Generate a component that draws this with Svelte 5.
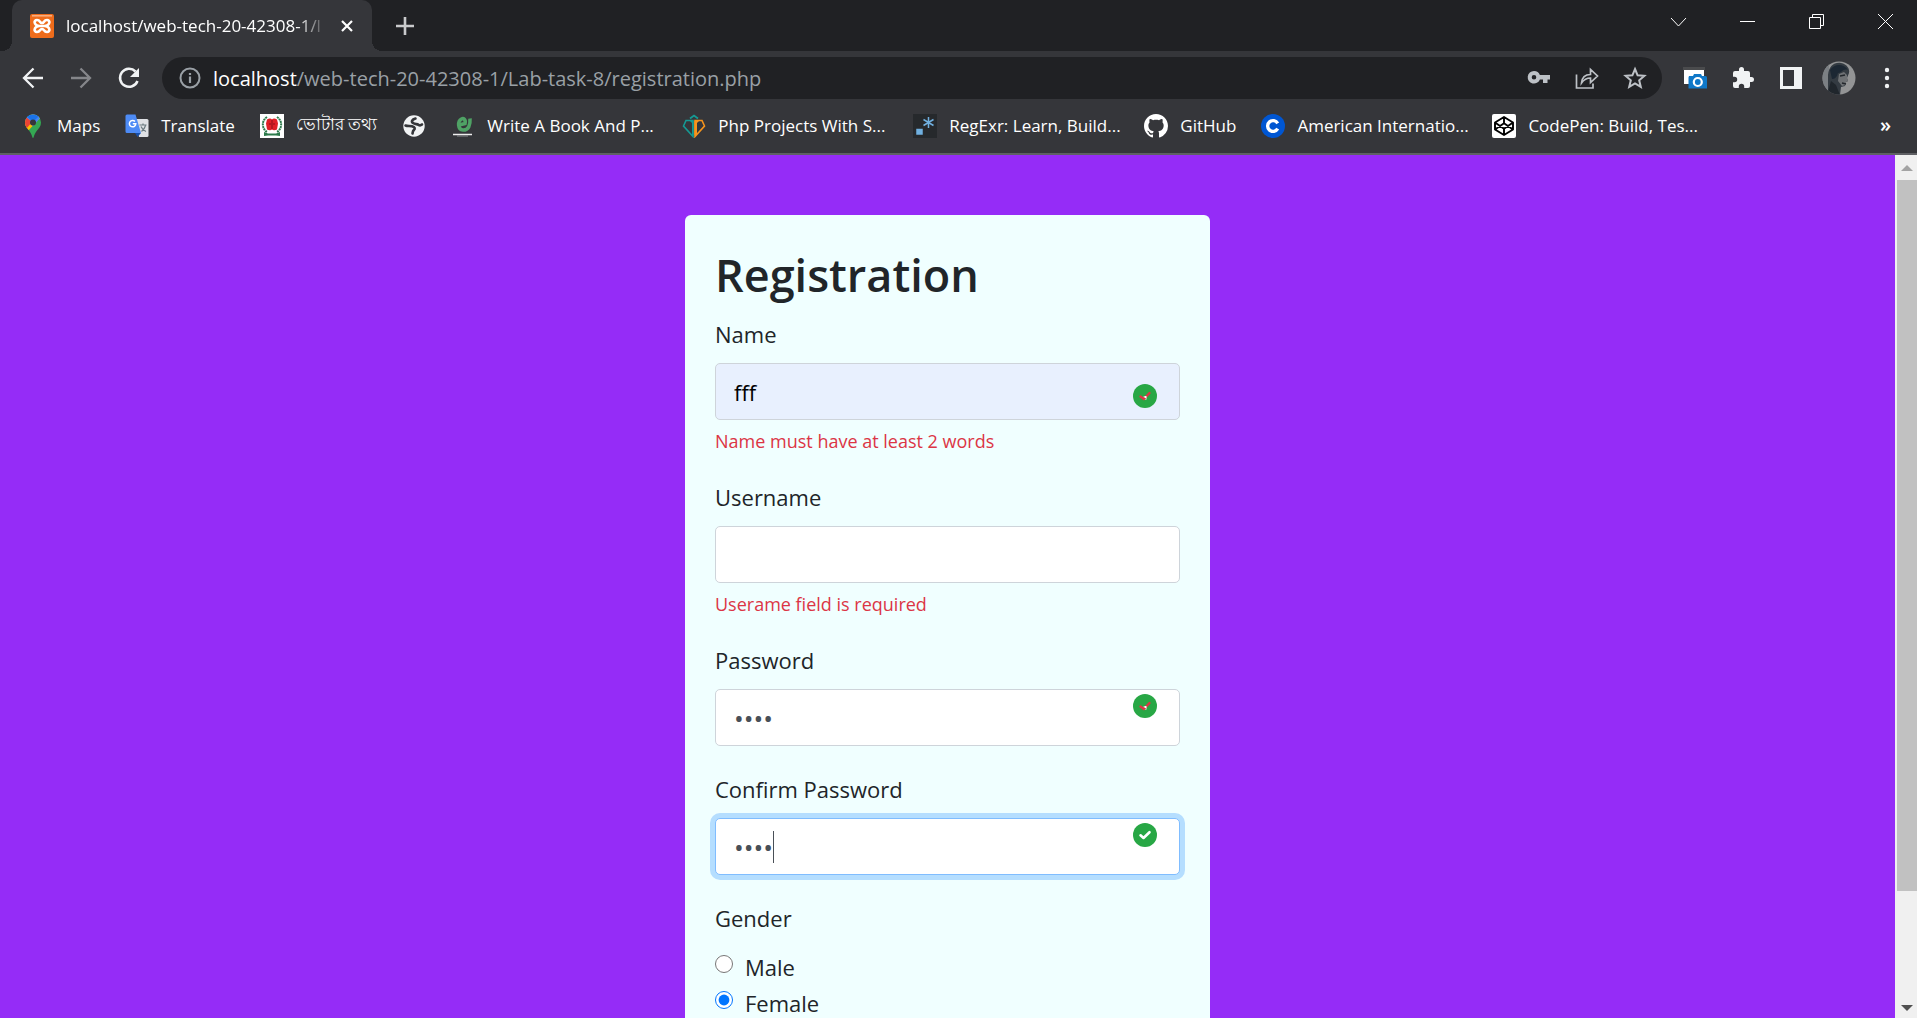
<script>
  let name = $state('fff');
  let username = $state('');
  let password = $state('1234');
  let confirm = $state('1234');
  let gender = $state('female');

  const bookmarks = [
    { id: 'maps', title: 'Maps' },
    { id: 'translate', title: 'Translate' },
    { id: 'voter', title: 'ভোটার তথ্য' },
    { id: 'globe', title: '' },
    { id: 'ebook', title: 'Write A Book And P...', long: true },
    { id: 'php', title: 'Php Projects With S...', long: true },
    { id: 'regexr', title: 'RegExr: Learn, Build...', long: true },
    { id: 'github', title: 'GitHub' },
    { id: 'coursera', title: 'American Internatio...', long: true },
    { id: 'codepen', title: 'CodePen: Build, Tes...', long: true }
  ];
</script>

{#snippet bookmarkIcon(id)}
  <svg class="icon" viewBox="0 0 24 24" aria-hidden="true">
    {#if id === 'maps'}
      <clipPath id="pin"><path d="M12 0.5a8 8 0 0 0-8 8c0 3.500 2 5.500 4 8 1.800 2.300 2.600 4 3.200 6.200.2.900.5 1.300.8 1.300s.6-.4.8-1.300c.6-2.200 1.400-3.900 3.200-6.200 2-2.500 4-4.500 4-8a8 8 0 0 0-8-8z" /></clipPath>
      <g clip-path="url(#pin)">
        <path d="M0 0h24v24H0z" fill="#34a853" />
        <path d="M20 0v3L6 18 0 10 10 0z" fill="#fbbc04" />
        <path d="M8 0h12v3l-8 9-8-6z" fill="#4285f4" />
        <path d="M0 0h6l-1 3 6 5-6 7-5-2z" fill="#ea4335" />
        <path d="M6 2.500 12 8l6-6-4-3H9z" fill="#1a73e8" />
      </g>
      <circle cx="12" cy="8.500" r="3" fill="#35363a" />
    {:else if id === 'translate'}
      <path d="M9 5h13a1.500 1.500 0 0 1 1.500 1.500v15A1.500 1.500 0 0 1 22 23h-8z" fill="#dfe1e5" />
      <path d="M10 19h6l-3.500 4z" fill="#174ea6" />
      <path d="M2 .5h8.500L16 19H2A1.500 1.500 0 0 1 .5 17.500V2A1.500 1.500 0 0 1 2 .5z" fill="#4d8bf5" />
      <path d="M10 7.500a3.200 3.200 0 1 0 .8 2.300H7.800" fill="none" stroke="#fff" stroke-width="1.500" />
      <path d="M14.500 11h7M18 9.500V11M16 12.500c1 2.500 2.500 4 5 5M20.500 11.500c-.8 3-2 4.500-4 6" fill="none" stroke="#6b7a80" stroke-width="1.200" />
    {:else if id === 'voter'}
      <path d="M0 0h24v24H0z" fill="#fff" />
      <path d="M7 3C1 7 2 15 7 18M17 3c6 4 5 12 0 15" fill="none" stroke="#2c7a4b" stroke-width="2" stroke-dasharray="2 .6" />
      <path d="M4 18l4 1.500h8l4-1.500v4l-4-.5H8L4 22z" fill="#2c7a4b" />
      <path d="M7 5.500c2-1.500 4-1.500 5 0 1-1.500 3-1.500 5 0l1 4-1 6c-2 1-4 1-5 0-1 1-3 1-5 0l-1-6z" fill="#e01f26" />
      <path d="M9 10h2M13 10h2M12 6v9" stroke="#8c1016" stroke-width="1" />
    {:else if id === 'globe'}
      <circle cx="12" cy="12" r="10.700" fill="#f1f3f4" />
      <path d="M13.500 4.500C10 5.500 9 7.500 11 9s4 .8 5.500 1.800 2.500.5 3.500-.3M3.500 11.500c2 .8 4.500.2 6.500.8 3 1 3.500 2.500 1.800 3.800-1.300 1-.8 2-1.300 3.400" fill="none" stroke="#35363a" stroke-width="2.600" stroke-linecap="round" stroke-linejoin="round" />
    {:else if id === 'ebook'}
      <path d="M8 11 14 9.500C15 5.500 12.500 4 10.500 5 6.500 7 6.500 15.500 12 16c5.500.3 7.500-5 7-11.500" fill="none" stroke="#4fa265" stroke-width="3.600" />
      <path d="M2 20.500h19" stroke="#eee" stroke-width="1.500" />
      <path d="M6 22h11" stroke="#8a8b8e" stroke-width="1" />
    {:else if id === 'php'}
      <path d="M8 4.500 12 1.500l4 3" fill="none" stroke="#159a94" stroke-width="1.800" />
      <path d="M4 6.500h7v16L1.500 12z" fill="none" stroke="#159a94" stroke-width="1.600" />
      <path d="M8 7h3.500v15H10V9z" fill="#159a94" />
      <path d="M13 6.500h7l2.500 5.500L13 22.500z" fill="none" stroke="#f7941d" stroke-width="1.600" />
      <path d="M12.500 7H17l-2 2v12h-2.500z" fill="#f7941d" />
    {:else if id === 'regexr'}
      <path d="M0 0h24v24H0z" fill="#26292c" />
      <path d="M4 15.500h5v4.500H4zM15.500 3v11M10.500 5.500l10 6M20.500 5.500l-10 6" fill="#70b0e0" stroke="#70b0e0" stroke-width="1.500" />
    {:else if id === 'github'}
      <path fill="#fff" d="M12 0C5.370 0 0 5.370 0 12c0 5.310 3.435 9.795 8.205 11.385.6.105.825-.255.825-.57 0-.285-.015-1.230-.015-2.235-3.015.555-3.795-.735-4.035-1.410-.135-.345-.72-1.410-1.230-1.695-.42-.225-1.020-.78-.015-.795.945-.015 1.620.87 1.845 1.230 1.080 1.815 2.805 1.305 3.495.99.105-.78.42-1.305.765-1.605-2.670-.3-5.460-1.335-5.460-5.925 0-1.305.465-2.385 1.230-3.225-.12-.3-.54-1.530.12-3.180 0 0 1.005-.315 3.300 1.230.96-.27 1.980-.405 3-.405s2.040.135 3 .405c2.295-1.560 3.300-1.230 3.300-1.230.66 1.650.24 2.880.12 3.180.765.84 1.230 1.905 1.230 3.225 0 4.605-2.805 5.625-5.475 5.925.435.375.81 1.095.81 2.220 0 1.605-.015 2.895-.015 3.300 0 .315.225.69.825.57A12.020 12.020 0 0 0 24 12c0-6.630-5.370-12-12-12z" />
    {:else if id === 'coursera'}
      <circle cx="12" cy="12" r="12" fill="#0056d2" />
      <path d="M16.700 9.300A5.400 5.400 0 1 0 16.700 14.700" fill="none" stroke="#fff" stroke-width="3.400" />
    {:else if id === 'codepen'}
      <rect width="24" height="24" rx="2" fill="#fff" />
      <path d="M12 3l9 5.500v7L12 21l-9-5.500v-7zM12 3v6M12 15v6M3 8.500l9 6.300 9-6.300M3 15.500l9-6.300 9 6.300" fill="none" stroke="#000" stroke-width="1.900" stroke-linejoin="round" />
    {/if}
  </svg>
{/snippet}

{#snippet validMark(tone)}
  <svg class="mark" viewBox="0 0 24 24" aria-hidden="true">
    <circle cx="12" cy="12" r="12" fill="#28a745" />
    {#if tone === 'mixed'}
      <path d="M10.500 12.500h3v3h-3z" fill="#fff" />
      <path d="M7.500 12.500 10.800 15 16.500 9" fill="none" stroke="#dc3545" stroke-width="2.400" stroke-linecap="round" />
      <path d="M11.500 12h2v2h-2z" fill="#fff" />
    {:else}
      <path d="M7.500 12.300 10.500 15 16.500 9.200" fill="none" stroke="#fff" stroke-width="2.600" stroke-linecap="round" stroke-linejoin="round" />
    {/if}
  </svg>
{/snippet}

<div class="browser">
  <header>
    <div class="tabstrip">
      <div class="tab">
        <svg class="icon" viewBox="0 0 24 24" aria-hidden="true">
          <rect width="24" height="24" rx="2" fill="#ee6c1b" />
          <path d="M2 1.800h20" stroke="#f9b184" stroke-width="1.500" />
          <path d="M9 12h6M9 12c-5.500-1-5.500-6-2-6s2.500 3 5 3 1.500-3 5-3 3.500 5-2 6c5.500 1 5.500 6 2 6s-2.500-3-5-3-1.500 3-5 3-3.500-5 2-6z" fill="none" stroke="#fff" stroke-width="2.600" stroke-linejoin="round" />
        </svg>
        <span class="tab-title">localhost/web-tech-20-42308-1/l</span>
        <button class="tab-close" aria-label="Close tab">
          <svg viewBox="0 0 14 14"><path d="M2 2l10 10M12 2 2 12" stroke="#fff" stroke-width="2.200" /></svg>
        </button>
      </div>
      <button class="new-tab" aria-label="New tab">
        <svg viewBox="0 0 20 20"><path d="M10 1v18M1 10h18" stroke="#c9cacc" stroke-width="2.600" /></svg>
      </button>
      <div class="window-controls">
        <button aria-label="Search tabs"><svg viewBox="0 0 17 17"><path d="M1 5l7.500 8L16 5" /></svg></button>
        <button aria-label="Minimize"><svg viewBox="0 0 17 17"><path d="M1 8.500h15" /></svg></button>
        <button aria-label="Restore"><svg viewBox="0 0 17 17"><path d="M1.500 4.500h11v11h-11zM4.500 4V1.500h11v11H13" /></svg></button>
        <button aria-label="Close window"><svg viewBox="0 0 17 17"><path d="M1 1l15 15M16 1 1 16" /></svg></button>
      </div>
    </div>

    <div class="toolbar">
      <button class="tool" aria-label="Back"><svg class="icon" viewBox="0 0 24 24"><path d="M22 12H3.500M12.500 2.500 3 12l9.500 9.500" fill="none" stroke="#f1f3f4" stroke-width="2.300" /></svg></button>
      <button class="tool" aria-label="Forward"><svg class="icon" viewBox="0 0 24 24"><path d="M2 12h18.500M11.500 2.500 21 12l-9.500 9.500" fill="none" stroke="#85868a" stroke-width="2.300" /></svg></button>
      <button class="tool" aria-label="Reload"><svg class="icon" viewBox="0 0 24 24"><path d="M20.500 15A9 9 0 1 1 18.500 5.500" fill="none" stroke="#f1f3f4" stroke-width="2.500" /><path d="M22 2v9h-9z" fill="#f1f3f4" /></svg></button>
      <div class="omnibox">
        <svg class="icon" viewBox="0 0 24 24" aria-hidden="true"><circle cx="12" cy="12" r="9.500" fill="none" stroke="#9aa0a6" stroke-width="2" /><path d="M12 10.500V17M12 7v2" stroke="#9aa0a6" stroke-width="2.200" /></svg>
        <span class="url"><b>localhost</b>/web-tech-20-42308-1/Lab-task-8/registration.php</span>
        <button class="tool" aria-label="Passwords"><svg class="icon" viewBox="0 0 24 24"><path fill="#bdc1c6" fill-rule="evenodd" d="M7 5a6.300 6.300 0 1 0 5.900 8.500H16V17h4.500v-3.500H23V9H12.900A6.300 6.300 0 0 0 7 5zm0 4a2.300 2.300 0 1 1 0 4.600A2.300 2.300 0 0 1 7 9z" /></svg></button>
        <button class="tool" aria-label="Share"><svg class="icon" viewBox="0 0 24 24"><path d="M1.500 8.500v13.500h16.500v-4.500M6.500 17c.5-6 4-8.500 9-8.500V3.500L22.500 10l-7 6.500V12c-4 0-6.500 1.500-9 5z" fill="none" stroke="#bdc1c6" stroke-width="1.700" /></svg></button>
        <button class="tool" aria-label="Bookmark this page"><svg class="icon" viewBox="0 0 24 24"><path d="M12 3l2.600 6.300 6.800.5-5.200 4.500 1.600 6.600L12 17.400l-5.800 3.500 1.600-6.600L2.600 9.800l6.800-.5z" fill="none" stroke="#bdc1c6" stroke-width="2" /></svg></button>
      </div>
      <button class="tool" aria-label="Screenshot extension"><svg class="icon" viewBox="0 0 24 24"><path d="M0 1h22v3H0z" fill="#4a4b4d" /><path d="M1 4h20v14H1z" fill="#fff" /><path d="M6 10h4l1-2h7l1 2h3.500a1.500 1.500 0 0 1 1.500 1.500v11H5.500V11.500z" fill="#0f78c8" /><circle cx="14.800" cy="16" r="4" fill="none" stroke="#fff" stroke-width="2.200" /></svg></button>
      <button class="tool" aria-label="Extensions"><svg class="icon" viewBox="0 0 24 24"><path fill="#f1f3f4" d="M20.500 11H19V7a2 2 0 0 0-2-2h-4V3.500a2.500 2.500 0 0 0-5 0V5H4a2 2 0 0 0-2 2v3.800h1.500a2.700 2.700 0 0 1 0 5.400H2V20a2 2 0 0 0 2 2h3.800v-1.500a2.700 2.700 0 0 1 5.400 0V22H17a2 2 0 0 0 2-2v-4h1.500a2.500 2.500 0 0 0 0-5z" /></svg></button>
      <button class="tool" aria-label="Side panel"><svg class="icon" viewBox="0 0 24 24"><path fill="#f1f3f4" fill-rule="evenodd" d="M1 1h22v22H1zM4 4v16h11V4z" /></svg></button>
      <button class="tool" aria-label="Profile">
        <svg class="avatar" viewBox="0 0 34 34">
          <clipPath id="face"><circle cx="17" cy="17" r="16.500" /></clipPath>
          <g clip-path="url(#face)">
            <path d="M0 0h34v34H0z" fill="#939495" />
            <path d="M0 0h7v34H0z" fill="#7c8084" />
            <path d="M6 34V14C7 5 12 1 19 2c6 1 9 6 8 10l-2 5 1 3-2 1-1 4-4 1-1 8z" fill="#343b42" />
            <path d="M17 13l5-2 3 3v3l1 3-2 1v3l-4 1-4-5z" fill="#6f7275" />
            <path d="M8 9c5-7 14-6 18 0-5-2-6 3-10 3-1 4-3 6-6 6z" fill="#1c2733" />
            <path d="M9 20l5 4 4 10H5z" fill="#20262c" />
            <path d="M18 15l5-1M20 22l4 1" stroke="#22272c" stroke-width="1.500" />
          </g>
        </svg>
      </button>
      <button class="tool" aria-label="Menu"><svg class="icon" viewBox="0 0 24 24"><circle cx="12" cy="4" r="2.200" fill="#f1f3f4" /><circle cx="12" cy="12" r="2.200" fill="#f1f3f4" /><circle cx="12" cy="20" r="2.200" fill="#f1f3f4" /></svg></button>
    </div>

    <nav class="bookmarks" aria-label="Bookmarks">
      {#each bookmarks as mark}
        <a href="#{mark.id}" class:long={mark.long} aria-label={mark.title || mark.id}>
          {@render bookmarkIcon(mark.id)}
          {#if mark.title}<span>{mark.title}</span>{/if}
        </a>
      {/each}
      <button class="more" aria-label="More bookmarks">»</button>
    </nav>
  </header>

  <div class="viewport">
    <main>
      <form class="card">
        <h1>Registration</h1>

        <div class="field">
          <label for="name">Name</label>
          <div class="control">
            <input id="name" class="autofilled" type="text" bind:value={name} />
            {@render validMark('mixed')}
          </div>
          <p class="error">Name must have at least 2 words</p>
        </div>

        <div class="field">
          <label for="username">Username</label>
          <div class="control">
            <input id="username" type="text" bind:value={username} />
          </div>
          <p class="error">Userame field is required</p>
        </div>

        <div class="field">
          <label for="password">Password</label>
          <div class="control high">
            <input id="password" type="password" autocomplete="off" bind:value={password} />
            {@render validMark('mixed')}
          </div>
        </div>

        <div class="field">
          <label for="confirm">Confirm Password</label>
          <div class="control high">
            <input id="confirm" class="active" type="password" autocomplete="off" bind:value={confirm} />
            <span class="caret"></span>
            {@render validMark('plain')}
          </div>
        </div>

        <fieldset>
          <legend>Gender</legend>
          <label class="radio"><input type="radio" name="gender" value="male" bind:group={gender} />Male</label>
          <label class="radio"><input type="radio" name="gender" value="female" bind:group={gender} />Female</label>
        </fieldset>
      </form>
    </main>
    <div class="scrollbar" aria-hidden="true">
      <svg class="arrow up" viewBox="0 0 12 6"><path d="M0 6 6 0l6 6z" /></svg>
      <div class="thumb"></div>
      <div class="rest"></div>
      <svg class="arrow down" viewBox="0 0 12 6"><path d="M0 0h12L6 6z" /></svg>
    </div>
  </div>
</div>

<style>
  :global(body) {
    margin: 0;
    overflow: hidden;
  }

  .browser {
    display: flex;
    flex-direction: column;
    height: 100vh;
    font-family: 'Open Sans', 'Noto Sans', sans-serif;
    color: #212529;
  }

  .browser :global(*) {
    box-sizing: border-box;
  }

  svg {
    display: block;
    flex: none;
  }

  button {
    display: flex;
    align-items: center;
    justify-content: center;
    flex: none;
    padding: 0;
    border: 0;
    background: none;
    font: inherit;
    color: inherit;
  }

  header {
    flex: none;
    background: #35363a;
    border-bottom: 2px solid #5f6064;
    overflow: hidden;
  }

  .icon {
    width: 24px;
    height: 24px;
  }

  .tabstrip {
    display: flex;
    height: 51px;
    padding-left: 12px;
    background: #202124;
  }

  .tab {
    position: relative;
    display: flex;
    align-items: center;
    gap: 12px;
    width: 360px;
    padding: 0 18px;
    border-radius: 10px 10px 0 0;
    background: #35363a;
    color: #fff;
    font-size: 17px;
  }

  .tab::before,
  .tab::after {
    content: '';
    position: absolute;
    bottom: 0;
    width: 10px;
    height: 10px;
  }

  .tab::before {
    right: 100%;
    background: radial-gradient(circle at 0 0, #202124 10px, #35363a 10px);
  }

  .tab::after {
    left: 100%;
    background: radial-gradient(circle at 100% 0, #202124 10px, #35363a 10px);
  }

  .tab-title {
    flex: 1;
    white-space: nowrap;
    mask-image: linear-gradient(to right, #000 88%, transparent);
  }

  .tab-close svg {
    width: 14px;
    height: 14px;
  }

  .new-tab {
    margin-left: 23px;
  }

  .new-tab svg {
    width: 20px;
    height: 20px;
  }

  .window-controls {
    display: flex;
    margin: 0 -3px 0 auto;
  }

  .window-controls button {
    width: 69px;
    height: 43px;
  }

  .window-controls svg {
    width: 17px;
    height: 17px;
    fill: none;
    stroke: #fff;
    stroke-width: 1;
  }

  .toolbar {
    display: flex;
    align-items: center;
    height: 54px;
    padding: 0 6px 0 9px;
  }

  .tool {
    width: 48px;
    height: 42px;
  }

  .omnibox {
    display: flex;
    align-items: center;
    flex: 1;
    height: 42px;
    margin: 0 9px;
    padding: 0 3px 0 16px;
    border-radius: 21px;
    background: #202124;
  }

  .url {
    flex: 1;
    margin-left: 11px;
    font-size: 20px;
    color: #9aa0a6;
    white-space: nowrap;
  }

  .url b {
    font-weight: 400;
    color: #fff;
  }

  .avatar {
    width: 34px;
    height: 34px;
  }

  .bookmarks {
    display: flex;
    align-items: center;
    gap: 25px;
    height: 48px;
    padding: 0 26px 6px 21px;
    color: #fff;
    font-size: 17px;
  }

  .bookmarks a {
    display: flex;
    align-items: center;
    gap: 12px;
    color: inherit;
    text-decoration: none;
    white-space: nowrap;
  }

  .bookmarks span {
    padding-bottom: 2px;
  }

  .bookmarks .long {
    width: 206px;
  }

  .more {
    margin-left: auto;
    padding-bottom: 4px;
    font-size: 20px;
    font-weight: 600;
  }

  .viewport {
    display: flex;
    flex: 1;
    min-height: 0;
  }

  main {
    flex: 1;
    padding: 60px 20px 0;
    background: #952cf7;
    overflow: hidden;
  }

  .card {
    max-width: 525px;
    margin: 0 auto;
    padding: 30px;
    border-radius: 6px;
    background: #f0ffff;
    font-size: 22px;
  }

  h1 {
    margin: 0 0 12px;
    font-size: 45px;
    line-height: 60px;
    font-weight: 600;
  }

  .field {
    margin-bottom: 26px;
  }

  .field label,
  legend {
    display: block;
    padding: 0;
    line-height: 34px;
  }

  .control {
    position: relative;
    margin-top: 12px;
  }

  .control input {
    display: block;
    width: 100%;
    height: 57px;
    padding: 0 18px;
    border: 1px solid #ced4da;
    border-radius: 5px;
    background: #fff;
    font: inherit;
    color: #495057;
    outline: none;
  }

  .control input[type='password'] {
    font-size: 26px;
  }

  .control .autofilled {
    background: #e8f0fe;
    color: #000;
  }

  .control .active {
    border-color: #80bdff;
    box-shadow: 0 0 0 5px #b5deff;
  }

  .mark {
    position: absolute;
    top: 21px;
    right: 23px;
    width: 24px;
    height: 24px;
  }

  .high .mark {
    top: 5px;
  }

  .caret {
    position: absolute;
    top: 13px;
    left: 58px;
    width: 1px;
    height: 32px;
    background: #495057;
  }

  .error {
    margin: 9px 0 0;
    padding-bottom: 1px;
    font-size: 18px;
    line-height: 24px;
    color: #dc3545;
  }

  fieldset {
    margin: 0;
    padding: 0;
    border: 0;
  }

  legend {
    margin-bottom: 14px;
  }

  .radio {
    display: flex;
    gap: 12px;
    line-height: 36px;
  }

  .radio input {
    width: 18px;
    height: 18px;
    margin: 6px 0 0;
    accent-color: #0075ff;
  }

  .scrollbar {
    display: flex;
    flex-direction: column;
    align-items: center;
    width: 22px;
    padding: 10px 0 7px 2px;
    background: #f0f0f0;
  }

  .arrow {
    width: 12px;
    height: 6px;
    fill: #505050;
  }

  .up {
    margin-bottom: 9px;
    fill: #a3a3a3;
  }

  .thumb {
    flex: 7;
    width: 100%;
    background: #c1c1c1;
  }

  .rest {
    flex: 1;
    margin-bottom: 12px;
  }
</style>
